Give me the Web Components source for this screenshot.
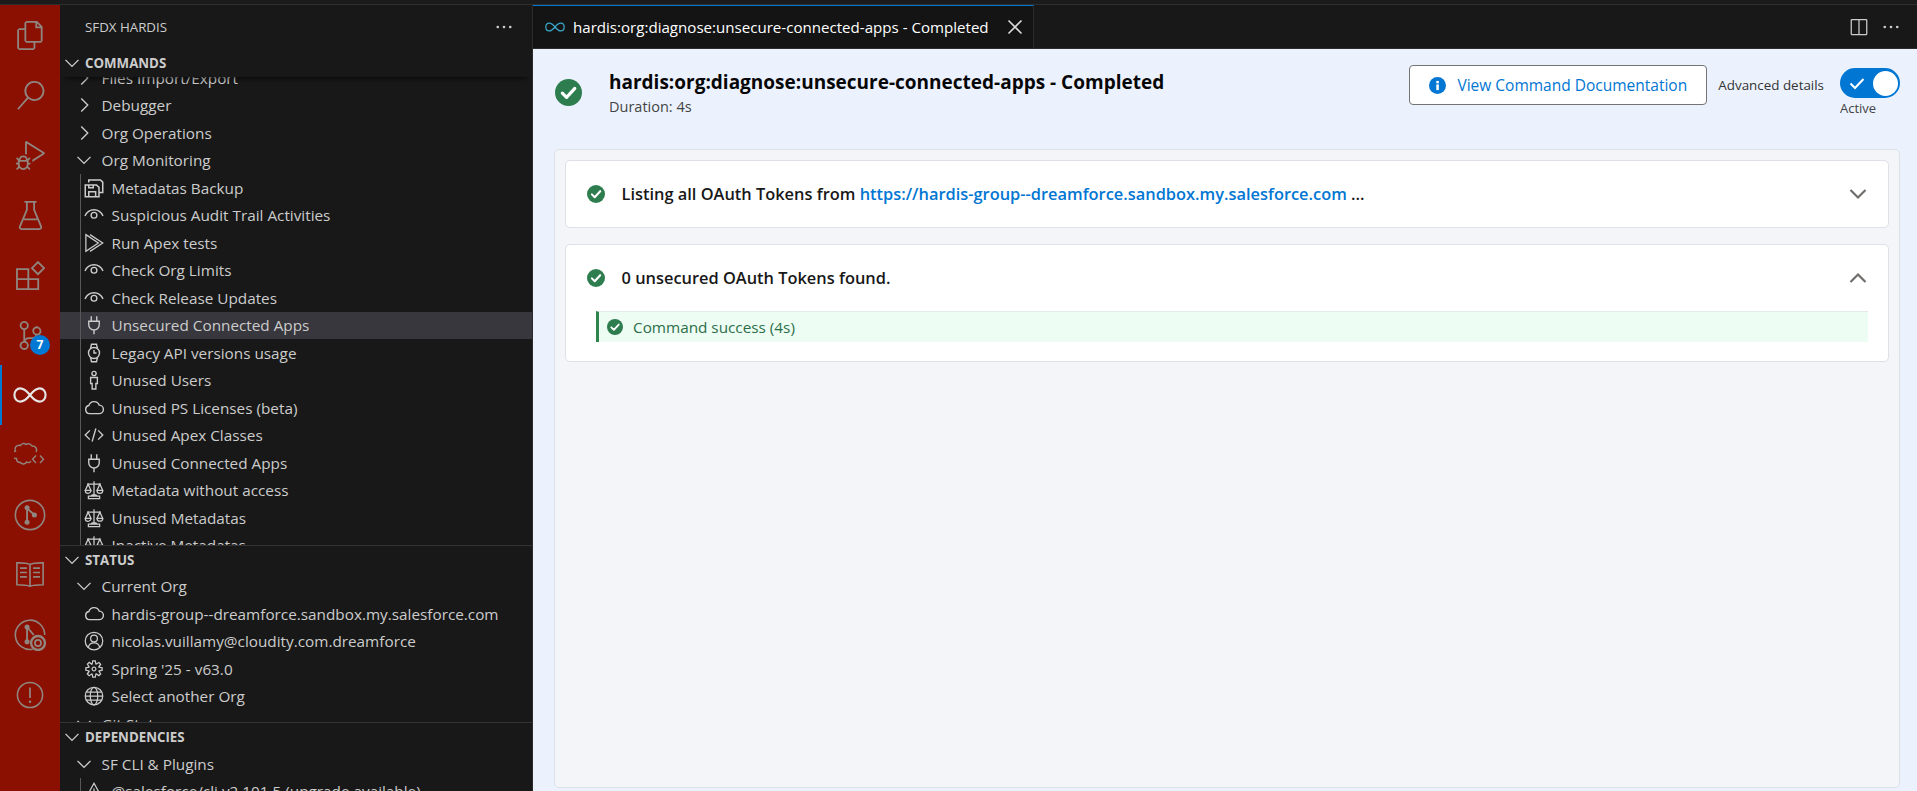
<!DOCTYPE html>
<html lang="en">
<head>
<meta charset="utf-8">
<title>SFDX Hardis</title>
<style>
  html, body { margin: 0; height: 100%; overflow: hidden; background: #181818; }
  body { font-family: "Open Sans", "Noto Sans", sans-serif; }
</style>
</head>
<body>
<vs-workbench></vs-workbench>

<script>
const ICONS = {
  files: '<path fill-rule="evenodd" d="M17.5 0h-9L7 1.5V6H2.5L1 7.5v15.07L2.5 24h12.07L16 22.57V18h4.7l1.3-1.43V4.5L17.5 0zm0 2.12l2.38 2.38H17.5V2.12zm-3 20.38h-12v-15H7v9.07L8.5 18h6v4.5zm6-6h-12v-15H16V6h4.5v10.5z"/>',
  search: '<path fill-rule="evenodd" d="M15.25 0a8.25 8.25 0 0 0-6.18 13.72L1 22.88l1.12 1 8.05-9.12A8.251 8.251 0 1 0 15.25.01V0zm0 15a6.75 6.75 0 1 1 0-13.5 6.75 6.75 0 0 1 0 13.5z"/>',
  debug: '<path fill-rule="evenodd" d="M10.94 13.5l-1.32 1.32a3.73 3.73 0 0 0-7.24 0L1.06 13.5 0 14.56l1.72 1.72-.22.22V18H0v1.5h1.5v.08c.077.489.214.966.41 1.42L0 22.94 1.06 24l1.65-1.65A4.308 4.308 0 0 0 6 24a4.31 4.31 0 0 0 3.29-1.65L10.94 24 12 22.94 10.09 21c.198-.464.336-.951.41-1.45v-.1H12V18h-1.5v-1.5l-.22-.22L12 14.56l-1.06-1.06zM6 13.5a2.25 2.25 0 0 1 2.25 2.25h-4.5A2.25 2.25 0 0 1 6 13.5zm3 6a3.33 3.33 0 0 1-3 3 3.33 3.33 0 0 1-3-3v-2.25h6v2.25zm14.76-9.9v1.26L13.5 17.37v-1.76l8.5-5.37L9 2v9.46a5.07 5.07 0 0 0-1.5-.72V.63L8.64 0l15.12 9.6z"/>',
  beaker: '<g fill="none" stroke="currentColor" stroke-width="1.5"><path d="M7 .8h10M9 .8v6.6L3.2 21.2c-.4 1.1.3 2 1.3 2h15c1 0 1.7-.9 1.3-2L15 7.4V.8M6.6 15.2h10.8"/></g>',
  extensions: '<g fill="none" stroke="currentColor" stroke-width="1.5"><path d="M.8 6.8h9.4v16.4H.8zM.8 15h17.6v8.2H10.2"/><path d="M18.2 .9l5 5-5 5-5-5z"/></g>',
  scm: '<path fill-rule="evenodd" d="M21.007 8.222A3.738 3.738 0 0 0 15.045 5.2a3.737 3.737 0 0 0 1.156 6.583 2.988 2.988 0 0 1-2.668 1.67h-2.99a4.456 4.456 0 0 0-2.989 1.165V7.4a3.737 3.737 0 1 0-1.494 0v9.117a3.776 3.776 0 1 0 1.816.099 2.99 2.99 0 0 1 2.668-1.667h2.99a4.484 4.484 0 0 0 4.223-3.039 3.736 3.736 0 0 0 3.25-3.687zM4.565 3.738a2.242 2.242 0 1 1 4.484 0 2.242 2.242 0 0 1-4.484 0zm4.484 16.441a2.242 2.242 0 1 1-4.484 0 2.242 2.242 0 0 1 4.484 0zm8.221-9.715a2.242 2.242 0 1 1 0-4.485 2.242 2.242 0 0 1 0 4.485z"/>',
  infinity: '<path fill="none" stroke="currentColor" stroke-width="1.5" d="M12 12c-2.4-3-4.4-4.7-6.9-4.7C2.6 7.3 1 9.5 1 12s1.6 4.7 4.100 4.700c2.500 0 4.500-1.700 6.900-4.700zm0 0c2.400-3 4.400-4.700 6.900-4.700 2.500 0 4.100 2.200 4.100 4.700s-1.600 4.700-4.100 4.700c-2.500 0-4.500-1.700-6.900-4.700z"/>',
  sfcloud: '<g fill="none" stroke="currentColor" stroke-width="1.400"><path d="M17 22A3 3 0 0 1 12.500 23A3.500 3.500 0 0 1 6.500 23.500A3.500 3.500 0 0 1 2.500 19.500A3.800 3.800 0 0 1 1.500 12A4 4 0 0 1 6.500 6.500A3.500 3.500 0 0 1 12 5.500A4 4 0 0 1 18 7A4 4 0 0 1 22 13"/><path d="M22 16.500L18.500 20.250L22 24M26 16.500L29.500 20.250L26 24"/></g>',
  gitcircle: '<circle cx="12" cy="12" r="11" fill="none" stroke="currentColor" stroke-width="1.2"/><path fill="none" stroke="currentColor" stroke-width="1.4" d="M9.800 6.500v11M9.800 7l5.400 4.800"/><circle cx="9.800" cy="6.500" r="1.900"/><circle cx="9.800" cy="17.500" r="1.900"/><circle cx="15.300" cy="12" r="1.900"/>',
  book: '<g fill="none" stroke="currentColor" stroke-width="1.3"><path d="M12 3.500C10 2.600 6 2.200 1.500 2.300v17.500c4.500 0 8.500.3 10.500 1.300 2-1 6-1.300 10.500-1.300V2.300C18 2.200 14 2.600 12 3.500zM12 3.500v18"/><path d="M4 6.500h5.500M4 10h5.500M4 13.500h5.500M14.500 6.500H20M14.500 10H20M14.500 13.500H20"/></g>',
  gitsearch: '<path fill="none" stroke="currentColor" stroke-width="1.2" d="M14 22.700A11 11 0 1 1 23 12"/><path fill="none" stroke="currentColor" stroke-width="1.4" d="M9.800 6v11M9.800 6l5 6"/><circle cx="9.800" cy="6" r="1.900"/><circle cx="9.800" cy="17" r="1.900"/><circle cx="18" cy="18" r="5.200" fill="none" stroke="currentColor" stroke-width="1.800"/><circle cx="18" cy="18" r="2.300" fill="none" stroke="currentColor" stroke-width="1.300"/>',
  alert: '<circle cx="12" cy="12" r="10.800" fill="none" stroke="currentColor" stroke-width="1.300"/><path fill="none" stroke="currentColor" stroke-width="1.500" d="M12 5.500v9"/><circle cx="12" cy="17.800" r="1.100"/>',
  saveall: '<g fill="none" stroke="currentColor" stroke-width="1.200"><path d="M1 5.500h9l2 2V15H1zM3.800 15v-4h5.500v4M3.800 5.500v2.200h3.600V5.500"/><path d="M3.800 3.500V1.500h9.400l1.800 1.800v8.200h-3"/></g>',
  eye: '<g fill="none" stroke="currentColor" stroke-width="1.100"><path d="M.8 8.800C2.200 5.600 4.900 3.800 8 3.800s5.800 1.800 7.200 5"/><circle cx="8" cy="8.200" r="2.300"/></g>',
  runall: '<g fill="none" stroke="currentColor" stroke-width="1"><path d="M1.500 1.300l10 6.700-10 6.700z"/><path d="M4.800 1.300L15 8 4.800 14.700"/></g>',
  plug: '<g fill="none" stroke="currentColor" stroke-width="1.100"><path d="M5.800 1v4M10.200 1v4M3.800 5h8.400v2.800a4.200 4.200 0 0 1-8.400 0zM8 12v3.400"/></g>',
  watch: '<g fill="none" stroke="currentColor" stroke-width="1.100"><circle cx="8" cy="8" r="4.400"/><path d="M8 5.500V8h2"/><path d="M5.300 4.200L6 1h4l.7 3.200M5.300 11.800L6 15h4l.7-3.200"/></g>',
  person: '<g fill="none" stroke="currentColor" stroke-width="1.100"><circle cx="8" cy="2.800" r="1.700"/><path d="M5.300 6h5.400v4.800H9.500v4.400h-3v-4.400H5.300z"/></g>',
  cloud: '<path fill="none" stroke="currentColor" stroke-width="1.100" d="M4.400 12.500a3.300 3.300 0 0 1-.5-6.500 4.400 4.400 0 0 1 8.300-.3 3.400 3.400 0 0 1-.2 6.800z"/>',
  code: '<g fill="none" stroke="currentColor" stroke-width="1.100"><path d="M4.700 4.300L1 8l3.700 3.700M11.300 4.300L15 8l-3.700 3.700M9.500 2.800L6.500 13.200"/></g>',
  law: '<g fill="none" stroke="currentColor" stroke-width="1"><path d="M8 1v11.500M2.500 3.200h11M3.500 12.800h9v2h-9zM5.500 12.800c.3-.8 1-1.200 2.500-1.200s2.200.4 2.500 1.200"/><path d="M3.300 3.300L1 8.300h4.600zM12.700 3.300L10.400 8.300H15zM1 8.300a2.300 2.300 0 0 0 4.600 0M10.400 8.300a2.300 2.300 0 0 0 4.600 0"/></g>',
  account: '<g fill="none" stroke="currentColor" stroke-width="1"><circle cx="8" cy="8" r="7"/><circle cx="8" cy="6" r="2.700"/><path d="M3.400 13.200c.5-2.300 2.200-3.700 4.600-3.700s4.100 1.400 4.600 3.700"/></g>',
  gear: '<path fill-rule="evenodd" d="M9.100 4.400L8.600 2H7.400l-.5 2.400-.7.3-2-1.300-.9.800 1.300 2-.2.700-2.400.5v1.200l2.400.5.3.8-1.300 2 .8.8 2-1.300.8.3.4 2.300h1.200l.5-2.400.8-.3 2 1.300.8-.8-1.300-2 .3-.8 2.300-.4V7.400l-2.400-.5-.3-.8 1.300-2-.8-.8-2 1.300-.7-.2zM9.400 1l.5 2.400L12 2.100l2 2-1.400 2.100 2.400.4v2.800l-2.400.5L14 12l-2 2-2.100-1.400-.5 2.400H6.600l-.5-2.400L4 13.900l-2-2 1.400-2.100L1 9.400V6.600l2.400-.5L2.100 4l2-2 2.100 1.400.4-2.400h2.800zm.6 7c0 1.100-.9 2-2 2s-2-.9-2-2 .9-2 2-2 2 .9 2 2zM8 9c.6 0 1-.4 1-1s-.4-1-1-1-1 .4-1 1 .4 1 1 1z"/>',
  globe: '<g fill="none" stroke="currentColor" stroke-width="1"><circle cx="8" cy="8" r="7"/><ellipse cx="8" cy="8" rx="3" ry="7"/><path d="M1 8h14M2 4.800h12M2 11.200h12"/></g>',
  warning: '<path fill="none" stroke="currentColor" stroke-width="1" d="M8 1.800L1 14.500h14zM8 6v5M8 12v1.200"/>',
  right: '<path fill="none" stroke="currentColor" stroke-width="1.100" d="M5.800 2.800L11 8l-5.200 5.200"/>',
  down: '<path fill="none" stroke="currentColor" stroke-width="1.100" d="M2.800 5.500L8 10.700l5.200-5.200"/>',
  dots: '<circle cx="3" cy="8" r="1.050"/><circle cx="8" cy="8" r="1.050"/><circle cx="13" cy="8" r="1.050"/>',
  split: '<path fill-rule="evenodd" d="M2 1.500h12l.7.700v11.600l-.7.700H2l-.7-.700V2.200zM2.300 2.500v11h5.200v-11zm6.200 0v11h5.200v-11z"/>',
  close: '<path fill="none" stroke="currentColor" stroke-width="1.300" d="M2.800 2.800l10.400 10.400M13.200 2.800L2.800 13.200"/>'
};

function svg(name, size, box) {
  return `<svg width="${size}" height="${size}" viewBox="0 0 ${box} ${box}" fill="currentColor" aria-hidden="true">${ICONS[name]}</svg>`;
}

function successIcon(size) {
  return `<svg width="${size}" height="${size}" viewBox="0 0 24 24" aria-hidden="true"><circle cx="12" cy="12" r="12" fill="#2e7d4f"/><path d="M6.500 12.500l3.800 3.800 7.300-8" fill="none" stroke="#fff" stroke-width="2.800" stroke-linecap="round" stroke-linejoin="round"/></svg>`;
}

class ActivityItem extends HTMLElement {
  constructor() {
    super();
    this.attachShadow({ mode: 'open' });
  }

  connectedCallback() {
    const size = this.getAttribute('size') || 29;
    const box = this.getAttribute('box') || 24;
    this.shadowRoot.innerHTML = `
      <style>
        :host { display: flex; align-items: center; justify-content: center; height: 60px; color: #90857f; position: relative; }
        :host([active]) { color: #e6e6e6; box-shadow: inset 2px 0 0 #0078d4; }
        svg { display: block; }
        .badge {
          position: absolute; left: 30px; top: 30px; width: 20px; height: 20px; border-radius: 50%;
          background: #0078d4; color: #fff; font: 700 12px/20px "Open Sans", sans-serif; text-align: center;
        }
      </style>
      ${svg(this.getAttribute('icon'), size, box)}
      ${this.hasAttribute('badge') ? `<span class="badge">${this.getAttribute('badge')}</span>` : ''}
    `;
  }
}
customElements.define('activity-item', ActivityItem);

class ActivityBar extends HTMLElement {
  constructor() {
    super();
    this.attachShadow({ mode: 'open' });
    this.shadowRoot.innerHTML = `
      <style>
        :host { display: flex; flex-direction: column; flex: 0 0 60px; background: #8b1002; }
      </style>
      <slot></slot>
    `;
  }
}
customElements.define('activity-bar', ActivityBar);

class TreeItem extends HTMLElement {
  constructor() {
    super();
    this.attachShadow({ mode: 'open' });
  }

  connectedCallback() {
    const twisty = this.getAttribute('twisty');
    const icon = this.getAttribute('icon');
    this.shadowRoot.innerHTML = `
      <style>
        :host {
          display: flex; align-items: center; height: 27.5px; color: #cccccc;
          font-size: 15.300px; white-space: nowrap;
        }
        :host([twisty]) { padding-left: 14px; }
        :host([icon]) { padding-left: 24px; }
        :host([guide]) { background: linear-gradient(#585858, #585858) 20px 0 / 1px 100% no-repeat; }
        :host([selected]) { background: linear-gradient(#585858, #585858) 20px 0 / 1px 100% no-repeat, #37373d; }
        .ico { flex: 0 0 20px; height: 20px; display: flex; align-items: center; justify-content: center; margin-right: 7.500px; }
        svg { display: block; }
      </style>
      ${twisty ? `<span class="ico">${svg(twisty, 20, 16)}</span>` : ''}
      ${icon ? `<span class="ico">${svg(icon, 20, 16)}</span>` : ''}
      <slot></slot>
    `;
  }
}
customElements.define('tree-item', TreeItem);

class ViewSection extends HTMLElement {
  constructor() {
    super();
    this.attachShadow({ mode: 'open' });
  }

  connectedCallback() {
    this.shadowRoot.innerHTML = `
      <style>
        :host { display: flex; flex-direction: column; overflow: hidden; box-sizing: border-box; }
        :host([border]) { border-top: 1px solid #333333; }
        header {
          flex: 0 0 27px; display: flex; align-items: center; padding-left: 2px; gap: 3px;
          color: #cccccc; font-size: 13.300px; font-weight: 700; position: relative;
        }
        :host([shadow]) header { box-shadow: #000 0 6px 6px -6px; z-index: 1; }
        header svg { display: block; }
        .body { flex: 1; overflow: hidden; }
        ::slotted(:first-child) { margin-top: var(--scroll, 0); }
      </style>
      <header>${svg('down', 20, 16)}<span>${this.getAttribute('heading')}</span></header>
      <div class="body"><slot></slot></div>
    `;
  }
}
customElements.define('view-section', ViewSection);

class SideBar extends HTMLElement {
  constructor() {
    super();
    this.attachShadow({ mode: 'open' });
    this.shadowRoot.innerHTML = `
      <style>
        :host { display: flex; flex-direction: column; flex: 0 0 473px; box-sizing: border-box; background: #181818; border-right: 1.500px solid #2b2b2b; overflow: hidden; }
        .title {
          flex: 0 0 44.500px; display: flex; align-items: center; justify-content: space-between;
          padding: 0 18px 0 25px; color: #cccccc; font-size: 13.300px; box-sizing: border-box;
        }
        svg { display: block; }
      </style>
      <div class="title"><span>SFDX HARDIS</span>${svg('dots', 20, 16)}</div>
      <slot></slot>
    `;
  }
}
customElements.define('side-bar', SideBar);

class EditorTabs extends HTMLElement {
  constructor() {
    super();
    this.attachShadow({ mode: 'open' });
  }

  connectedCallback() {
    this.shadowRoot.innerHTML = `
      <style>
        :host { display: flex; flex: 0 0 44px; box-sizing: border-box; background: #181818; border-bottom: 1px solid #2b2b2b; align-items: stretch; }
        .tab {
          display: flex; align-items: center; width: 501px; box-sizing: border-box; padding: 0 0 0 12px;
          background: #141414; border-top: 1.500px solid #0078d4; border-right: 1px solid #2b2b2b;
          color: #ffffff; font-size: 15.100px; white-space: nowrap;
        }
        .inf { color: #3aa6c8; margin-right: 8px; display: flex; }
        .x { margin-left: auto; margin-right: 8px; display: flex; color: #d8d8d8; }
        .actions { margin-left: auto; display: flex; align-items: center; gap: 12px; padding-right: 16px; color: #cccccc; }
        svg { display: block; }
      </style>
      <div class="tab">
        <span class="inf">${svg('infinity', 20, 24)}</span>
        <span>${this.getAttribute('label')}</span>
        <span class="x">${svg('close', 20, 16)}</span>
      </div>
      <div class="actions">${svg('split', 20, 16)}${svg('dots', 20, 16)}</div>
    `;
  }
}
customElements.define('editor-tabs', EditorTabs);

class CommandHeader extends HTMLElement {
  constructor() {
    super();
    this.attachShadow({ mode: 'open' });
  }

  connectedCallback() {
    this.shadowRoot.innerHTML = `
      <style>
        :host { display: flex; flex: 0 0 100px; box-sizing: border-box; padding: 16px 17px 0 22px; align-items: flex-start; }
        .state { margin-top: 13.500px; margin-right: 27px; display: flex; }
        .titles { display: flex; flex-direction: column; margin-top: 4px; }
        h1 { margin: 0; font-size: 19px; line-height: 26px; font-weight: 700; color: #080707; white-space: nowrap; }
        .dur { font-size: 14.500px; line-height: 20px; margin-top: 2px; color: #444444; }
        .doc {
          margin-left: auto; width: 298px; height: 40px; box-sizing: border-box; display: flex; align-items: center;
          justify-content: center; gap: 11px; background: #ffffff; border: 1px solid #747474; border-radius: 4px;
          color: #0176d3; font-size: 15.500px; white-space: nowrap;
        }
        .adv { margin: 9px 16px 0 11px; font-size: 13.400px; line-height: 22px; color: #333333; white-space: nowrap; }
        .sw { display: flex; flex-direction: column; width: 60px; margin-top: 3px; }
        .state svg, .doc svg { display: block; }
        .sw span { font-size: 13px; line-height: 20px; color: #444444; }
      </style>
      <div class="state">${successIcon(27)}</div>
      <div class="titles">
        <h1>${this.getAttribute('heading')}</h1>
        <div class="dur">${this.getAttribute('duration')}</div>
      </div>
      <div class="doc">
        <svg width="17" height="17" viewBox="0 0 24 24"><circle cx="12" cy="12" r="12" fill="#0176d3"/><rect x="10.300" y="10.500" width="3.600" height="8" fill="#fff"/><rect x="10.300" y="5.500" width="3.600" height="3.400" fill="#fff"/></svg>
        <span>View Command Documentation</span>
      </div>
      <div class="adv">Advanced details</div>
      <div class="sw"><toggle-switch></toggle-switch><span>Active</span></div>
    `;
  }
}
customElements.define('command-header', CommandHeader);

class ToggleSwitch extends HTMLElement {
  constructor() {
    super();
    this.attachShadow({ mode: 'open' });
    this.shadowRoot.innerHTML = `
      <style>
        :host { display: flex; align-items: center; justify-content: space-between; width: 60px; height: 30px; box-sizing: border-box; padding: 0 2.500px 0 8px; border-radius: 15px; background: #0176d3; }
        i { display: block; width: 25px; height: 25px; border-radius: 50%; background: #fff; }
        svg { display: block; }
      </style>
      <svg width="18" height="18" viewBox="0 0 18 18"><path d="M2.500 9.500l4.500 4.500 8.500-9" fill="none" stroke="#fff" stroke-width="2"/></svg>
      <i></i>
    `;
  }
}
customElements.define('toggle-switch', ToggleSwitch);

class StepCard extends HTMLElement {
  constructor() {
    super();
    this.attachShadow({ mode: 'open' });
  }

  connectedCallback() {
    const up = this.hasAttribute('open');
    this.shadowRoot.innerHTML = `
      <style>
        :host { display: block; box-sizing: border-box; background: #ffffff; border: 1px solid #dde0e6; border-radius: 5px; }
        .head { display: flex; align-items: center; height: 66px; padding: 0 20px 0 21px; color: #181818; font-size: 16.400px; font-weight: 600; white-space: nowrap; }
        .state { display: flex; margin-right: 17px; }
        .chev { margin-left: auto; display: flex; color: #706e6b; }
        .chev svg { transform: ${up ? 'scaleY(-1)' : 'none'}; }
        svg { display: block; }
        .rows { padding: 0 20px 19px 30px; margin-top: 0; }
      </style>
      <div class="head">
        <span class="state">${successIcon(18)}</span>
        <span><slot></slot></span>
        <span class="chev"><svg width="20" height="20" viewBox="0 0 20 20"><path d="M2.500 6l7.500 7.500L17.500 6" fill="none" stroke="currentColor" stroke-width="2.200"/></svg></span>
      </div>
      ${up ? '<div class="rows"><slot name="rows"></slot></div>' : ''}
    `;
  }
}
customElements.define('step-card', StepCard);

class SuccessRow extends HTMLElement {
  constructor() {
    super();
    this.attachShadow({ mode: 'open' });
    this.shadowRoot.innerHTML = `
      <style>
        :host {
          display: flex; align-items: center; height: 31px; box-sizing: border-box; padding-left: 8px;
          background: #edfdf3; border-left: 3px solid #2e844a; border-top: 1px solid #e3ebe6;
          color: #2c6e4a; font-size: 15.300px; font-weight: 400; white-space: nowrap;
        }
        span { display: flex; margin-right: 10.500px; }
        svg { display: block; }
      </style>
      <span>${successIcon(16)}</span><slot></slot>
    `;
  }
}
customElements.define('success-row', SuccessRow);

class CommandView extends HTMLElement {
  constructor() {
    super();
    this.attachShadow({ mode: 'open' });
    this.shadowRoot.innerHTML = `
      <style>
        :host { display: flex; flex-direction: column; flex: 1; background: #ebf2fe; min-height: 0; }
        .panel {
          flex: 1; margin: 0 17px 3px 21px; padding: 9.500px 10.500px 0 9.500px; display: flex; flex-direction: column; gap: 16px;
          background: #f3f5f9; border: 1px solid #dde0e6; border-radius: 5px;
        }
      </style>
      <slot name="head"></slot>
      <div class="panel"><slot></slot></div>
    `;
  }
}
customElements.define('command-view', CommandView);

class VsWorkbench extends HTMLElement {
  constructor() {
    super();
    this.attachShadow({ mode: 'open' });
  }

  connectedCallback() {
    this.renderHTML();
  }

  static get styleCss() {
    return `
      :host { display: flex; flex-direction: column; height: 100vh; overflow: hidden; }
      .strip { flex: 0 0 5px; box-sizing: border-box; background: #1b1b1b; border-bottom: 1px solid #2e2e2e; }
      .main { flex: 1; display: flex; min-height: 0; }
      .editor { flex: 1; display: flex; flex-direction: column; min-width: 0; }
      a { color: #0176d3; text-decoration: none; }
    `;
  }

  renderHTML() {
    this.shadowRoot.innerHTML = `
      <style>${VsWorkbench.styleCss}</style>
      <div class="strip"></div>
      <div class="main">
        <activity-bar>
          <activity-item icon="files"></activity-item>
          <activity-item icon="search"></activity-item>
          <activity-item icon="debug"></activity-item>
          <activity-item icon="beaker"></activity-item>
          <activity-item icon="extensions"></activity-item>
          <activity-item icon="scm" badge="7"></activity-item>
          <activity-item icon="infinity" size="34" active></activity-item>
          <activity-item icon="sfcloud" size="32" box="32"></activity-item>
          <activity-item icon="gitcircle" size="32"></activity-item>
          <activity-item icon="book" size="30"></activity-item>
          <activity-item icon="gitsearch" size="32"></activity-item>
          <activity-item icon="alert" size="28"></activity-item>
        </activity-bar>

        <side-bar>
          <view-section heading="COMMANDS" shadow style="flex: 0 0 495.500px; --scroll: -12.500px">
            <tree-item twisty="right">Files Import/Export</tree-item>
            <tree-item twisty="right">Debugger</tree-item>
            <tree-item twisty="right">Org Operations</tree-item>
            <tree-item twisty="down">Org Monitoring</tree-item>
            <tree-item icon="saveall" guide>Metadatas Backup</tree-item>
            <tree-item icon="eye" guide>Suspicious Audit Trail Activities</tree-item>
            <tree-item icon="runall" guide>Run Apex tests</tree-item>
            <tree-item icon="eye" guide>Check Org Limits</tree-item>
            <tree-item icon="eye" guide>Check Release Updates</tree-item>
            <tree-item icon="plug" guide selected>Unsecured Connected Apps</tree-item>
            <tree-item icon="watch" guide>Legacy API versions usage</tree-item>
            <tree-item icon="person" guide>Unused Users</tree-item>
            <tree-item icon="cloud" guide>Unused PS Licenses (beta)</tree-item>
            <tree-item icon="code" guide>Unused Apex Classes</tree-item>
            <tree-item icon="plug" guide>Unused Connected Apps</tree-item>
            <tree-item icon="law" guide>Metadata without access</tree-item>
            <tree-item icon="law" guide>Unused Metadatas</tree-item>
            <tree-item icon="law" guide>Inactive Metadatas</tree-item>
          </view-section>
          <view-section heading="STATUS" border style="flex: 0 0 177px; --scroll: -.5px">
            <tree-item twisty="down">Current Org</tree-item>
            <tree-item icon="cloud">hardis-group--dreamforce.sandbox.my.salesforce.com</tree-item>
            <tree-item icon="account">nicolas.vuillamy@cloudity.com.dreamforce</tree-item>
            <tree-item icon="gear">Spring '25 - v63.0</tree-item>
            <tree-item icon="globe">Select another Org</tree-item>
            <tree-item twisty="down">Git Status</tree-item>
          </view-section>
          <view-section heading="DEPENDENCIES" border style="flex: 1 1 0">
            <tree-item twisty="down">SF CLI &amp; Plugins</tree-item>
            <tree-item icon="warning" guide>@salesforce/cli v2.101.5 (upgrade available)</tree-item>
          </view-section>
        </side-bar>

        <div class="editor">
          <editor-tabs label="hardis:org:diagnose:unsecure-connected-apps - Completed"></editor-tabs>
          <command-view>
            <command-header slot="head" heading="hardis:org:diagnose:unsecure-connected-apps - Completed" duration="Duration: 4s"></command-header>
            <step-card>Listing all OAuth Tokens from <a href="#">https://hardis-group--dreamforce.sandbox.my.salesforce.com</a> ...</step-card>
            <step-card open>0 unsecured OAuth Tokens found.<success-row slot="rows">Command success (4s)</success-row></step-card>
          </command-view>
        </div>
      </div>
    `;
  }
}
customElements.define('vs-workbench', VsWorkbench);
</script>
</body>
</html>
